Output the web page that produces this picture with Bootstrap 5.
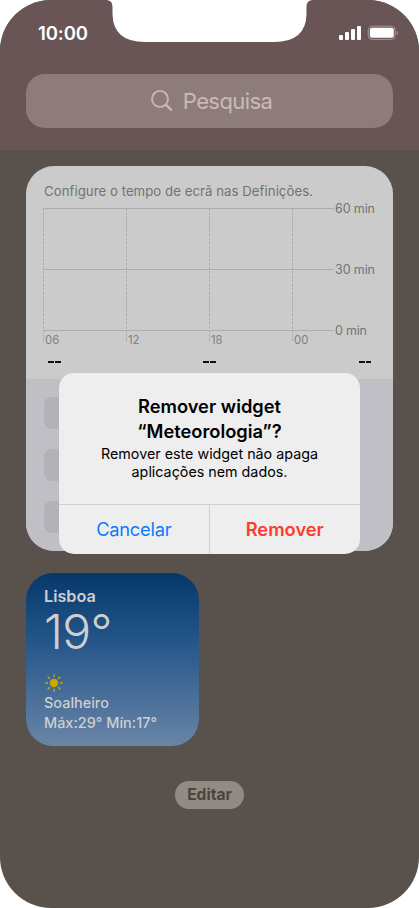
<!DOCTYPE html>
<html lang="pt">
<head>
<meta charset="utf-8">
<meta name="viewport" content="width=device-width, initial-scale=1">
<title>Remover widget</title>
<link href="https://cdn.jsdelivr.net/npm/bootstrap@5.3.0/dist/css/bootstrap.min.css" rel="stylesheet">
<style>
body{background:#fff;font-family:Inter,"Liberation Sans",sans-serif;overflow:hidden}
.phone{width:419px;height:908px;border-radius:51px;background:#59514b}
.top-zone{height:150px;background:#6a5556;padding:0 26px}
.status{height:74px}
.notch{left:107px;top:0}
.clock{font-size:18.5px;line-height:24px;font-weight:600;margin:21px 0 0 12px;letter-spacing:-.1px}
.signals{margin:25px -5px 0 0}
.search{height:54px;border-radius:19px;background:#8e7c7b;color:#cbb9b9;font-size:22px;line-height:54px;letter-spacing:-.6px;padding-left:3px}
.search-label{margin-left:9px}
.widgets{padding:16px 26px 0}
.usage{height:385px;border-radius:28px;background:#cbcbcb;color:#737373}
.usage-top{height:213px;padding:15px 18px 0 18px}
.usage-note{font-size:13.2px;line-height:20px;letter-spacing:.05px;white-space:nowrap}
.chart{margin:1px 0 0 -2px}
.dashes{height:12px;margin-top:5px;padding:2px 4px 0 4px}
.dash{width:12.5px;height:1.6px;background:linear-gradient(90deg,#111 5.6px,transparent 5.6px,transparent 6.9px,#111 6.9px)}
.usage-list{height:172px;background:#c0bfc5;padding:18px 18px 0;gap:20px}
.app-slot{width:32px;height:32px;border-radius:8px;background:#b3b2b8}
.weather{width:173px;height:173px;margin-top:22px;border-radius:27px;padding:14px 18px 0;color:#cfcfcf;background:linear-gradient(#06386c,#25568a 40%,#6985a7)}
.city{font-size:16.2px;line-height:19px;font-weight:600}
.temp{font-size:48px;line-height:51px;font-weight:300;letter-spacing:-.6px}
.cond{font-size:14.4px;line-height:19.5px;font-weight:500;letter-spacing:.03px;white-space:nowrap}
.edit{width:69px;height:28px;margin-top:35px;border-radius:14px;background:#928a84;color:#4c433d;font-size:15.6px;line-height:28px;font-weight:700}
.alert-box{left:59px;top:373px;width:301px;height:181px;border-radius:15px;background:#eee;color:#000}
.alert-text{height:132px;padding-top:21px;border-bottom:1px solid #d0d0d0}
.alert-title{font-size:18.3px;line-height:24.5px;font-weight:600}
.alert-body{font-size:14.3px;line-height:18px;margin-top:2px}
.act{font-size:18.3px;border-radius:0;padding:0;line-height:49px}
.act-cancel{color:#0a7aff;letter-spacing:-.25px;border-right:1px solid #d0d0d0!important}
.act-remove{color:#ff3b30;font-weight:600}
</style>
</head>
<body>
<main class="phone position-relative overflow-hidden">
  <header class="top-zone">
    <div class="status d-flex justify-content-between align-items-start">
      <div class="clock text-white">10:00</div>
      <svg class="signals" width="60" height="16" viewBox="0 0 60 16" fill="#fff">
        <rect x="1" y="10" width="4" height="5" rx="1"/><rect x="7" y="7" width="4" height="8" rx="1"/><rect x="13" y="4" width="4" height="11" rx="1"/><rect x="19" y="1" width="4" height="14" rx="1"/>
        <rect x="30.2" y="1.2" width="27" height="13.2" rx="4" fill="none" stroke="#a69999"/><rect x="31.800" y="2.800" width="24" height="10" rx="2.3"/><path d="M58.7 6v4q1.2-.6 1.2-2t-1.2-2" fill="#a69999"/>
      </svg>
    </div>
    <div class="search d-flex align-items-center justify-content-center">
      <svg width="24" height="24" viewBox="0 0 24 24" fill="none" stroke="currentColor" stroke-width="1.9" stroke-linecap="round"><circle cx="10" cy="9.9" r="8"/><path d="m15.8 15.700 5.2 5" stroke-width="2.3"/></svg>
      <span class="search-label">Pesquisa</span>
    </div>
  </header>
  <svg class="notch position-absolute" width="205" height="42" viewBox="0 0 205 42" fill="#fff"><path d="M0 0h205Q199.500.5 199.500 7v7Q199 42 167 42H38Q6 42 5.500 14V7Q5.500.5 0 0Z"/></svg>

  <section class="widgets">
    <div class="usage overflow-hidden">
      <div class="usage-top">
        <div class="usage-note">Configure o tempo de ecrã nas Definições.</div>
        <svg class="chart d-block" width="336" height="152" viewBox="42 202 336 152" fill="none" stroke="#adadad">
          <path d="M43 208.500h291M43 269.500h291M43 330.500h291"/>
          <path stroke-dasharray="3 1.200" d="M43.500 208v134M126.500 208v134M209.500 208v134M292.500 208v134"/>
          <g fill="#737373" stroke="none" font-size="12.500"><text x="335" y="213" textLength="40">60 min</text><text x="335" y="274" textLength="40">30 min</text><text x="335" y="335" textLength="32">0 min</text></g>
          <g fill="#808080" stroke="none" font-size="11.300"><text x="45" y="344">06</text><text x="128" y="344">12</text><text x="211" y="344">18</text><text x="294" y="344">00</text></g>
        </svg>
        <div class="dashes d-flex justify-content-between"><i class="dash"></i><i class="dash"></i><i class="dash"></i></div>
      </div>
      <div class="usage-list d-flex flex-column"><span class="app-slot"></span><span class="app-slot"></span><span class="app-slot"></span></div>
    </div>
    <div class="weather">
      <div class="city">Lisboa</div>
      <div class="temp">19°</div>
      <svg class="d-block mt-3" width="20" height="20" viewBox="-10 -10 20 20" stroke="#cfa500" stroke-width="1.400" stroke-linecap="round"><circle r="4.200" fill="#cfa500" stroke="none"/><path d="M0-6.500V-8.300M0 6.500V8.300M-6.500 0H-8.300M6.500 0H8.300M4.600 4.600 5.900 5.900M-4.600 4.600-5.900 5.900M4.600-4.600 5.900-5.900M-4.600-4.600-5.900-5.900"/></svg>
      <div class="cond">Soalheiro</div>
      <div class="cond">Máx:29° Mín:17°</div>
    </div>
    <div class="edit mx-auto text-center">Editar</div>
  </section>

  <div class="alert-box position-absolute overflow-hidden text-center" role="alertdialog">
    <div class="alert-text">
      <div class="alert-title">Remover widget<br>“Meteorologia”?</div>
      <div class="alert-body">Remover este widget não apaga<br>aplicações nem dados.</div>
    </div>
    <div class="d-flex">
      <button class="btn act act-cancel w-50 border-0" type="button">Cancelar</button>
      <button class="btn act act-remove w-50 border-0" type="button">Remover</button>
    </div>
  </div>
</main>
<script src="https://cdn.jsdelivr.net/npm/bootstrap@5.3.0/dist/js/bootstrap.bundle.min.js"></script>
</body>
</html>
